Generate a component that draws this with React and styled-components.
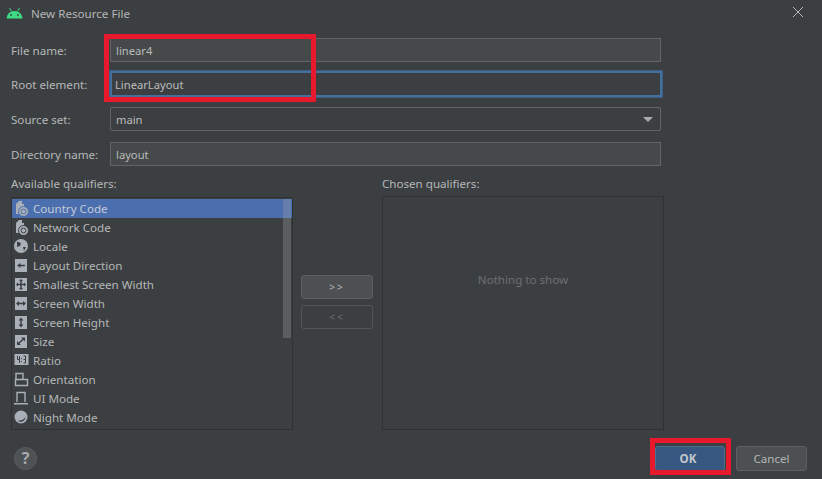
import styled, { createGlobalStyle } from "styled-components";

const GlobalStyle = createGlobalStyle`
	html, body {
		margin: 0;
		padding: 0;
		background: #3c3f41;
	}
	body {
		font-family: "Noto Sans", "Open Sans", sans-serif;
		font-size: 11.6px;
		line-height: 15px;
		color: #bbbbbb;
	}
`;

const Dialog = styled.div`
	position: relative;
	width: 822px;
	height: 479px;
	overflow: hidden;
	background: #3c3f41;
	display: flex;
	flex-direction: column;
`;

const TitleBar = styled.div`
	height: 26px;
	display: flex;
	align-items: center;
	padding: 0 19px 0 6px;
	gap: 8px;
	color: #b4b6b7;
	flex-shrink: 0;
`;

const Title = styled.span`
	flex: 1;
`;

const CloseSlot = styled.span`
	margin-top: -2px;
`;

const Form = styled.div`
	display: flex;
	flex-direction: column;
	padding: 12px 0 0 11px;
`;

const Row = styled.div`
	display: flex;
	align-items: center;
	height: 24px;
	margin-bottom: ${(p) => p.$gap ?? 11}px;
`;

const Label = styled.label`
	width: 99px;
	flex-shrink: 0;
	color: #b5b7b8;
`;

const Field = styled.div`
	box-sizing: border-box;
	width: 551px;
	height: ${(p) => (p.$focused ? 26 : 24)}px;
	flex-shrink: 0;
	display: flex;
	align-items: center;
	justify-content: space-between;
	padding: 0 7px 0 ${(p) => (p.$focused ? 3 : 5)}px;
	border: ${(p) => (p.$focused ? "2px solid #46709c" : "1px solid #646464")};
	border-radius: ${(p) => (p.$select ? 2 : 0)}px;
	background: ${(p) => (p.$disabled ? "#45494a" : "#3c3f41")};
	color: #bbbbbb;
	font-size: 11.2px;
	${(p) => p.$focused && "width: 552px; box-shadow: 0 0 0 1px #3b5d82;"}
`;

const Arrow = styled.span`
	width: 0;
	height: 0;
	border-left: 5px solid transparent;
	border-right: 5px solid transparent;
	border-top: 5px solid #a9abad;
`;

const Columns = styled.div`
	display: flex;
	padding-left: 11px;
`;

const Column = styled.div`
	display: flex;
	flex-direction: column;
	width: ${(p) => p.$width}px;
`;

const ColumnLabel = styled.div`
	box-sizing: border-box;
	height: ${(p) => (p.$chosen ? 30 : 31)}px;
	padding-top: 10px;
	color: #b5b7b8;
`;

const ListBox = styled.div`
	position: relative;
	box-sizing: border-box;
	height: ${(p) => (p.$chosen ? 234 : 233)}px;
	padding-top: 1px;
	border: 1px solid #2f3233;
	overflow: hidden;
`;

const ListRow = styled.div`
	height: 19px;
	display: flex;
	align-items: center;
	gap: 3px;
	padding-left: 2px;
	background: ${(p) => (p.$selected ? "#4b6eaf" : "transparent")};
	color: ${(p) => (p.$selected ? "#c4cbd6" : "#b5b7b8")};
	white-space: nowrap;
`;

const ScrollThumb = styled.div`
	position: absolute;
	top: 1px;
	right: 1px;
	width: 8px;
	height: 139px;
	background: rgba(166, 166, 166, 0.3);
`;

const Mover = styled.div`
	width: 89px;
	display: flex;
	flex-direction: column;
	gap: 6px;
	padding: 109px 0 0 8px;
	box-sizing: border-box;
`;

const MoveButton = styled.div`
	box-sizing: border-box;
	width: 72px;
	height: 24px;
	display: flex;
	align-items: center;
	justify-content: center;
	border: 1px solid ${(p) => (p.$disabled ? "#545556" : "#5e6060")};
	border-radius: 3px;
	background: ${(p) => (p.$disabled ? "transparent" : "#4c5052")};
	color: ${(p) => (p.$disabled ? "#686a6b" : "#b5b7b8")};
	font-size: 10px;
	letter-spacing: 2px;
`;

const Empty = styled.div`
	height: 100%;
	display: flex;
	align-items: center;
	justify-content: center;
	padding-bottom: 68px;
	box-sizing: border-box;
	color: #6d6f70;
`;

const Footer = styled.div`
	display: flex;
	align-items: center;
	gap: 11px;
	padding: 16px 15px 0 14px;
`;

const Help = styled.div`
	width: 23px;
	height: 23px;
	margin-right: auto;
	border-radius: 50%;
	display: flex;
	align-items: center;
	justify-content: center;
	background: #4f5254;
	border: 1px solid #5a5d5f;
	box-sizing: border-box;
	color: #a9abad;
	font-size: 16px;
	font-weight: 700;
`;

const Button = styled.div`
	box-sizing: border-box;
	width: ${(p) => p.$width}px;
	height: 25px;
	display: flex;
	align-items: center;
	justify-content: center;
	padding-right: ${(p) => (p.$primary ? 4 : 0)}px;
	border-radius: 3px;
	border: 1px solid ${(p) => (p.$primary ? "#4c708c" : "#5e6060")};
	background: ${(p) => (p.$primary ? "#365880" : "#4c5052")};
	color: ${(p) => (p.$primary ? "#c2c7cc" : "#b5b7b8")};
	font-weight: ${(p) => (p.$primary ? 700 : 400)};
`;

const Highlight = styled.div`
	position: absolute;
	box-sizing: border-box;
	left: ${(p) => p.$x}px;
	top: ${(p) => p.$y}px;
	width: ${(p) => p.$w}px;
	height: ${(p) => p.$h}px;
	border: 5px solid #e8192c;
`;

const IconSvg = styled.svg`
	flex-shrink: 0;
	display: block;
`;

function AndroidIcon() {
	return (
		<IconSvg width="17" height="12" viewBox="0 0 17 12">
			<path d="M0.5 11.5C1 7 4 4 8.5 4S16 7 16.5 11.5Z" fill="#3ddc84" />
			<path d="M3.5 1L5.5 4.5M13.5 1L11.5 4.5" stroke="#3ddc84" strokeWidth="1" />
			<circle cx="5" cy="8" r="0.9" fill="#3c3f41" />
			<circle cx="12" cy="8" r="0.9" fill="#3c3f41" />
		</IconSvg>
	);
}

function CloseIcon() {
	return (
		<IconSvg width="10" height="10" viewBox="0 0 10 10">
			<path d="M0 0L10 10M10 0L0 10" stroke="#b4b6b7" strokeWidth="1" />
		</IconSvg>
	);
}

const GRAY = "#a9b0b8";
const DARK = "#3c3f41";

function QualifierIcon({ kind, selected }) {
	const bg = selected ? "#4b6eaf" : DARK;
	const box = <rect x="1" y="1" width="12" height="13" fill={GRAY} />;
	const arrow = (d) => <path d={d} stroke={DARK} strokeWidth="1.5" fill="none" />;
	const sim = (
		<>
			<path d="M2 8V0H8V3H10V6H7V13H2Z" fill={GRAY} />
			<path d="M2 3L5 0H2Z" fill={bg} />
			<circle cx="9.5" cy="10.5" r="5" fill={GRAY} stroke={bg} />
			<circle cx="9.5" cy="10.5" r="2.4" fill="none" stroke={bg} />
		</>
	);
	const shapes = {
		country: sim,
		network: sim,
		locale: (
			<>
				<circle cx="7" cy="7" r="7" fill={GRAY} />
				<path d="M3 2.5L7 4L6 7L3 8ZM9 8L12 8L10 12Z" fill={DARK} />
			</>
		),
		direction: (
			<>
				{box}
				{arrow("M11 7.5H5")}
				<path d="M3 7.5L6.5 5V10Z" fill={DARK} />
			</>
		),
		smallest: (
			<>
				{box}
				{arrow("M7 3V12M3 7.5H11")}
				<path d="M7 2L5 4H9ZM7 13L5 11H9ZM2 7.5L4 5.5V9.5ZM12 7.5L10 5.5V9.5Z" fill={DARK} />
			</>
		),
		width: (
			<>
				{box}
				{arrow("M3 7.5H11")}
				<path d="M2 7.5L5 5V10ZM12 7.5L9 5V10Z" fill={DARK} />
			</>
		),
		height: (
			<>
				{box}
				{arrow("M7 4V11")}
				<path d="M7 2.5L4.5 5.5H9.5ZM7 12.5L4.5 9.5H9.5Z" fill={DARK} />
			</>
		),
		size: (
			<>
				{box}
				{arrow("M4 10L10 4.5")}
				<path d="M11 3.5V7.5L7 3.5ZM3 11V7L7 11Z" fill={DARK} />
			</>
		),
		ratio: (
			<>
				<rect x="0.5" y="1" width="14" height="11" fill={GRAY} />
				<path d="M3.5 3V6.5H6M5.5 3V10M7.5 5V6M7.5 8V9M9.5 3H11.5V10H9.5M9.5 6.5H11.5" stroke={DARK} strokeWidth="1" fill="none" />
			</>
		),
		orientation: (
			<path d="M2 7V1.5H9V7M1.5 7.5H13.5V13.5H1.5Z" fill="none" stroke={GRAY} strokeWidth="1.4" />
		),
		ui: (
			<>
				<path d="M3 11V1.5H11V11" fill="none" stroke={GRAY} strokeWidth="1.4" />
				<path d="M0 12H14V13.5H0Z" fill={GRAY} />
			</>
		),
		night: (
			<>
				<circle cx="7" cy="7" r="6.5" fill={GRAY} />
				<path d="M6 12C10 12 12 9 11.5 4C12 8 9 11 4 10.5Z" fill={DARK} />
			</>
		),
	};
	return (
		<IconSvg width="16" height="15" viewBox="0 0 16 15">
			{shapes[kind]}
		</IconSvg>
	);
}

const qualifiers = [
	["country", "Country Code"],
	["network", "Network Code"],
	["locale", "Locale"],
	["direction", "Layout Direction"],
	["smallest", "Smallest Screen Width"],
	["width", "Screen Width"],
	["height", "Screen Height"],
	["size", "Size"],
	["ratio", "Ratio"],
	["orientation", "Orientation"],
	["ui", "UI Mode"],
	["night", "Night Mode"],
];

export default function App() {
	return (
		<Dialog>
			<GlobalStyle />
			<TitleBar>
				<AndroidIcon />
				<Title>New Resource File</Title>
				<CloseSlot>
					<CloseIcon />
				</CloseSlot>
			</TitleBar>

			<Form>
				<Row $gap={10}>
					<Label>File name:</Label>
					<Field $disabled>linear4</Field>
				</Row>
				<Row>
					<Label>Root element:</Label>
					<Field $focused>LinearLayout</Field>
				</Row>
				<Row>
					<Label>Source set:</Label>
					<Field $select>
						main
						<Arrow />
					</Field>
				</Row>
				<Row $gap={0}>
					<Label>Directory name:</Label>
					<Field $disabled>layout</Field>
				</Row>
			</Form>

			<Columns>
				<Column $width={282}>
					<ColumnLabel>Available qualifiers:</ColumnLabel>
					<ListBox>
						{qualifiers.map(([kind, name], i) => (
							<ListRow key={kind} $selected={i === 0}>
								<QualifierIcon kind={kind} selected={i === 0} />
								{name}
							</ListRow>
						))}
						<ScrollThumb />
					</ListBox>
				</Column>
				<Mover>
					<MoveButton>&gt;&gt;</MoveButton>
					<MoveButton $disabled>&lt;&lt;</MoveButton>
				</Mover>
				<Column $width={282}>
					<ColumnLabel $chosen>Chosen qualifiers:</ColumnLabel>
					<ListBox $chosen>
						<Empty>Nothing to show</Empty>
					</ListBox>
				</Column>
			</Columns>

			<Footer>
				<Help>?</Help>
				<Button $primary $width={70}>OK</Button>
				<Button $width={71}>Cancel</Button>
			</Footer>

			<Highlight $x={104} $y={34} $w={212} $h={68} />
			<Highlight $x={650} $y={438} $w={81} $h={37} />
		</Dialog>
	);
}
